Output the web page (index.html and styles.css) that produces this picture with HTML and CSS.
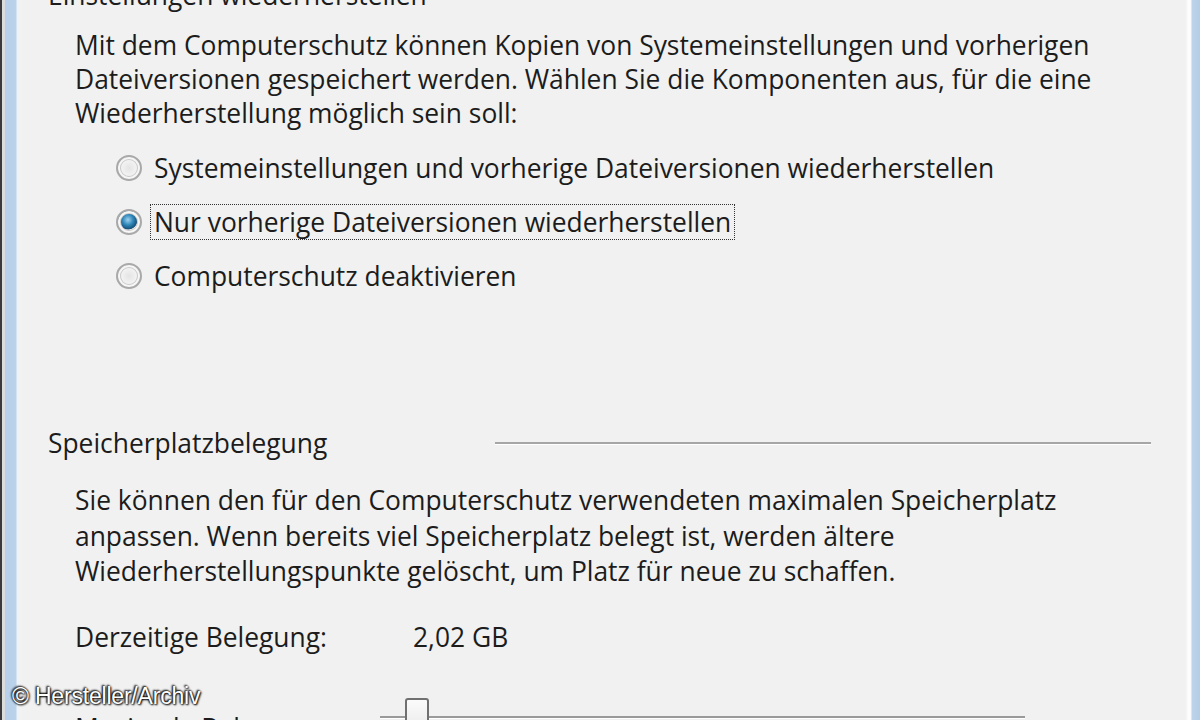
FILE: index.html
```html
<!DOCTYPE html>
<html lang="de">
<head>
<meta charset="utf-8">
<title>Computerschutz</title>
<link rel="stylesheet" href="styles.css">
</head>
<body>
<div class="window">
  <div class="edge-left"></div>
  <main class="panel">
    <h2 class="group-title">Einstellungen wiederherstellen</h2>
    <p class="desc">Mit dem Computerschutz können Kopien von Systemeinstellungen und vorherigen<br>Dateiversionen gespeichert werden. Wählen Sie die Komponenten aus, für die eine<br>Wiederherstellung möglich sein soll:</p>
    <div class="radios">
      <label class="radio"><span class="dot"></span><span class="lbl">Systemeinstellungen und vorherige Dateiversionen wiederherstellen</span></label>
      <label class="radio checked"><span class="dot"></span><span class="lbl focus">Nur vorherige Dateiversionen wiederherstellen</span></label>
      <label class="radio"><span class="dot"></span><span class="lbl">Computerschutz deaktivieren</span></label>
    </div>
    <div class="section-head"><span class="section-title">Speicherplatzbelegung</span><span class="rule"></span></div>
    <p class="desc desc2">Sie können den für den Computerschutz verwendeten maximalen Speicherplatz<br>anpassen. Wenn bereits viel Speicherplatz belegt ist, werden ältere<br>Wiederherstellungspunkte gelöscht, um Platz für neue zu schaffen.</p>
    <div class="row"><span class="key">Derzeitige Belegung:</span><span class="val">2,02 GB</span></div>
    <div class="row row-slider"><span class="key">Maximale Belegung:</span><div class="slider"><span class="track"></span><span class="thumb"></span></div></div>
  </main>
  <div class="edge-right"></div>
  <div class="watermark">© Hersteller/Archiv</div>
</div>
</body>
</html>
```
FILE: styles.css
```css
html, body {
  margin: 0;
  padding: 0;
  width: 1200px;
  height: 720px;
  overflow: hidden;
  background: #f0f1f0;
}

.window {
  position: relative;
  display: flex;
  width: 1200px;
  height: 720px;
  overflow: hidden;
  font-family: "Open Sans", "Noto Sans", sans-serif;
  color: #1c1c1c;
  font-size: 26.4px;
}

.edge-left {
  flex: 0 0 22px;
  background: linear-gradient(to right, #3a3a3a 0, #3a3a3a 2px, #dcdcdc 2px, #dcdcdc 5px, #b7cfe8 5px, #bad2ea 16px, #eef3f8 17px, #f4f2ef 22px);
}

.edge-right {
  flex: 0 0 14px;
  background: linear-gradient(to right, #f4f4f4 0, #ffffff 3px, #f7f9fb 5px, #bcd3ea 6px, #b5cde6 14px);
}

.panel {
  flex: 1;
  padding-left: 26px;
  margin-top: -22px;
}

.group-title {
  margin: 0;
  font-size: 26.4px;
  font-weight: normal;
  line-height: 34px;
  white-space: nowrap;
}

.desc {
  margin: 16px 0 0 27px;
  line-height: 34px;
  white-space: nowrap;
}

.radios {
  margin: 11px 0 0 68px;
  display: flex;
  flex-direction: column;
}

.radio {
  display: flex;
  align-items: center;
  height: 54px;
  gap: 8px;
}

.dot {
  width: 26px;
  height: 26px;
  border-radius: 50%;
  box-sizing: border-box;
  border: 2px solid #a9a9a9;
  background: radial-gradient(circle at 50% 50%, #e4e4e4 0, #f4f4f4 55%, #d9d9d9 100%);
  box-shadow: inset 0 0 0 2px #f6f6f6, inset 0 0 0 3px #c9c9c9;
  flex: 0 0 auto;
}

.radio.checked .dot {
  background: radial-gradient(circle at 45% 40%, #9fd0ee 0, #2d86b8 30%, #174f78 52%, #e8edf0 56%, #f4f4f4 100%);
}

.lbl {
  white-space: nowrap;
  padding: 0 3px;
  line-height: 34px;
  border: 1px dotted transparent;
}

.lbl.focus {
  border-color: #333;
}

.section-head {
  margin-top: 123px;
  display: flex;
  align-items: center;
  height: 34px;
}

.section-title {
  white-space: nowrap;
}

.rule {
  margin-left: 168px;
  width: 656px;
  height: 2px;
  background: #a6a6a6;
  border-bottom: 1px solid #ffffff;
}

.desc2 {
  margin-top: 23px;
  line-height: 35.5px;
}

.row {
  margin: 30px 0 0 27px;
  display: flex;
  align-items: center;
  height: 34px;
}

.key {
  width: 338px;
  white-space: nowrap;
}

.row-slider {
  margin-top: 57px;
}

.slider {
  position: relative;
  width: 645px;
  height: 34px;
  margin-left: -33px;
}

.track {
  position: absolute;
  left: 0;
  right: 0;
  top: 5px;
  height: 2px;
  background: #9a9a9a;
  border-bottom: 1px solid #ffffff;
}

.thumb {
  position: absolute;
  left: 25px;
  top: -13px;
  width: 24px;
  height: 40px;
  box-sizing: border-box;
  border: 2px solid #707070;
  border-radius: 3px 3px 0 0;
  background: linear-gradient(to bottom, #fbfbfb, #e6e6e6);
}

.watermark {
  position: absolute;
  left: 12px;
  top: 683px;
  font-family: "Liberation Sans", Arial, sans-serif;
  font-size: 23px;
  color: #ffffff;
  letter-spacing: -0.2px;
  text-shadow: 0 0 2px #000, 1px 1px 2px #000, -1px -1px 2px #000;
  white-space: nowrap;
}
```
